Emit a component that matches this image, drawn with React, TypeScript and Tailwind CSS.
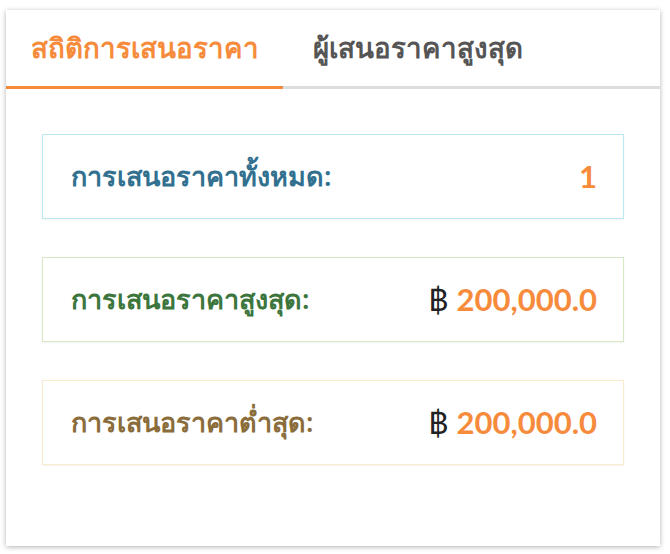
export default function App() {
  const rows = [
    { label: "การเสนอราคาทั้งหมด:", value: "1", baht: false, box: "border-[#bce8f1] text-[#31708f]" },
    { label: "การเสนอราคาสูงสุด:", value: "200,000.0", baht: true, box: "border-[#d6e9c6] text-[#3c763d]" },
    { label: "การเสนอราคาต่ำสุด:", value: "200,000.0", baht: true, box: "border-[#faebcc] text-[#8a6d3b]" },
  ];

  return (
    <div className="h-[554px] w-[670px] bg-white pl-[6px] pt-[10px] font-['Noto_Sans',sans-serif]">
      <div className="h-[536px] w-[654px] bg-white shadow-[0_1px_5px_rgba(0,0,0,0.3)]">
        <div className="flex h-[79px] border-b-[3px] border-[#ddd]">
          <div className="-mb-[3px] flex w-[277px] items-center justify-center border-b-[3px] border-[#f68b3c] text-[27.7px] font-semibold text-[#f68b3c]">
            สถิติการเสนอราคา
          </div>
          <div className="flex items-center px-[30px] text-[27.7px] font-semibold text-[#555]">
            ผู้เสนอราคาสูงสุด
          </div>
        </div>
        <div className="flex flex-col gap-[38px] px-[36px] pt-[45px]">
          {rows.map((r) => (
            <div
              key={r.label}
              className={`flex h-[85px] items-center justify-between border pl-[28px] pr-[26px] shadow-[0_1px_2px_rgba(0,0,0,0.05)] ${r.box}`}
            >
              <span className="text-[27px] font-semibold">{r.label}</span>
              <span className="flex items-center font-['Lato',sans-serif] text-[31px] font-bold">
                {r.baht && <span className="mr-[8px] font-normal text-[#222]">฿</span>}
                <span className="text-[#f68b3c]">{r.value}</span>
              </span>
            </div>
          ))}
        </div>
      </div>
    </div>
  );
}
